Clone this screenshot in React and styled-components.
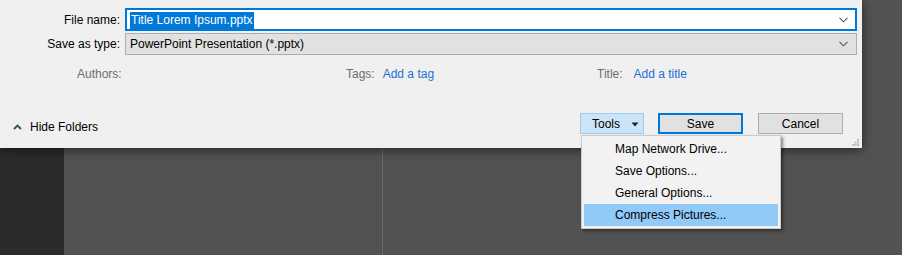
import React from "react";
import styled, { createGlobalStyle } from "styled-components";

const GlobalStyle = createGlobalStyle`
  html, body {
    margin: 0;
    padding: 0;
    background: #525252;
    overflow: hidden;
  }
  body {
    font-family: "Liberation Sans", Arial, sans-serif;
    font-size: 12px;
  }
`;

const Screen = styled.div`
  position: relative;
  width: 902px;
  height: 255px;
  display: grid;
  grid-template-columns: 64px 319px 1fr;
  background: #525252;
`;

const SideStrip = styled.div`
  background: #2b2b2b;
`;

const Pane = styled.div`
  background: #525252;
  border-right: ${(p) => (p.$divider ? "1px solid #6a6a6a" : "none")};
`;

const Dialog = styled.div`
  position: absolute;
  top: 0;
  left: 0;
  width: 862px;
  height: 148px;
  box-sizing: border-box;
  padding: 8px 5px 0 0;
  background: #f0f0f0;
  box-shadow: 0 2px 10px rgba(0, 0, 0, 0.55);
  display: flex;
  flex-direction: column;
  color: #000;
`;

const FieldRow = styled.div`
  display: grid;
  grid-template-columns: 120px 1fr;
  column-gap: 5px;
  align-items: center;
  margin-bottom: 2px;
`;

const Label = styled.span`
  text-align: right;
`;

const Combo = styled.div`
  height: ${(p) => (p.$focused ? "23px" : "22px")};
  box-sizing: border-box;
  display: flex;
  align-items: center;
  padding: 0 8px 0 4px;
  background: ${(p) => (p.$focused ? "#fff" : "#e1e1e1")};
  border: 1px solid ${(p) => (p.$focused ? "#0078d7" : "#adadad")};
  outline: ${(p) => (p.$focused ? "1px solid #0078d7" : "none")};
  outline-offset: -2px;
`;

const ComboText = styled.span`
  flex: 1;
`;

const Selected = styled.span`
  background: #0078d7;
  color: #fff;
  padding: 1px 1px 2px;
`;

const Chevron = () => (
  <svg width="9" height="6" viewBox="0 0 9 6">
    <path d="M0.5 0.8 L4.5 4.8 L8.5 0.8" fill="none" stroke="#555" strokeWidth="1.1" />
  </svg>
);

const MetaRow = styled.div`
  display: flex;
  align-items: center;
  margin-top: 8px;
  padding-left: 77px;
  height: 18px;
`;

const MetaItem = styled.div`
  width: ${(p) => p.$w}px;
  display: flex;
  gap: ${(p) => p.$gap || 11}px;
  flex-shrink: 0;
`;

const MetaLabel = styled.span`
  color: #6d6d6d;
`;

const MetaLink = styled.span`
  color: #1c6fd0;
`;

const Footer = styled.div`
  margin-top: auto;
  display: flex;
  align-items: center;
  padding: 0 14px 14px 13px;
`;

const HideFolders = styled.div`
  display: flex;
  align-items: center;
  gap: 8px;
  margin-top: 7px;
`;

const Spacer = styled.div`
  flex: 1;
`;

const Button = styled.div`
  width: ${(p) => p.$w}px;
  height: 21px;
  box-sizing: border-box;
  display: flex;
  align-items: center;
  justify-content: center;
  margin-left: ${(p) => p.$ml || 0}px;
  background: #e1e1e1;
  border: ${(p) => (p.$default ? "2px solid #0078d7" : "1px solid #adadad")};
`;

const ToolsButton = styled.div`
  width: 64px;
  height: 21px;
  box-sizing: border-box;
  display: flex;
  align-items: center;
  padding: 1px 4px 0 11px;
  background: #cce4f7;
  border: 1px solid #9fcdf2;
  justify-content: space-between;
`;

const Grip = styled.svg`
  position: absolute;
  right: 3px;
  bottom: 2px;
`;

const Menu = styled.div`
  position: absolute;
  top: 135px;
  left: 581px;
  width: 200px;
  box-sizing: border-box;
  padding: 2px;
  background: #f2f2f2;
  border: 1px solid #cccccc;
  box-shadow: 2px 2px 3px rgba(0, 0, 0, 0.45);
`;

const MenuItem = styled.div`
  height: 22px;
  display: flex;
  align-items: center;
  padding-left: 31px;
  background: ${(p) => (p.$active ? "#91c9f7" : "transparent")};
`;

const menuItems = [
  "Map Network Drive...",
  "Save Options...",
  "General Options...",
  "Compress Pictures...",
];

export default function App() {
  return (
    <>
      <GlobalStyle />
      <Screen>
        <SideStrip />
        <Pane $divider />
        <Pane />

        <Dialog>
          <FieldRow>
            <Label>File name:</Label>
            <Combo $focused>
              <ComboText>
                <Selected>Title Lorem Ipsum.pptx</Selected>
              </ComboText>
              <Chevron />
            </Combo>
          </FieldRow>
          <FieldRow>
            <Label>Save as type:</Label>
            <Combo>
              <ComboText>PowerPoint Presentation (*.pptx)</ComboText>
              <Chevron />
            </Combo>
          </FieldRow>

          <MetaRow>
            <MetaItem $w={269}>
              <MetaLabel>Authors:</MetaLabel>
            </MetaItem>
            <MetaItem $w={251} $gap={8}>
              <MetaLabel>Tags:</MetaLabel>
              <MetaLink>Add a tag</MetaLink>
            </MetaItem>
            <MetaItem $w={120}>
              <MetaLabel>Title:</MetaLabel>
              <MetaLink>Add a title</MetaLink>
            </MetaItem>
          </MetaRow>

          <Footer>
            <HideFolders>
              <svg width="9" height="6" viewBox="0 0 9 6">
                <path d="M1 5 L4.5 1.5 L8 5" fill="none" stroke="#4a4a4a" strokeWidth="1.8" />
              </svg>
              <span>Hide Folders</span>
            </HideFolders>
            <Spacer />
            <ToolsButton>
              <span>Tools</span>
              <svg width="8" height="5" viewBox="0 0 8 5">
                <path d="M0.5 0.5 L7.5 0.5 L4 4.5 Z" fill="#222" />
              </svg>
            </ToolsButton>
            <Button $w={85} $ml={14} $default>
              Save
            </Button>
            <Button $w={85} $ml={15}>
              Cancel
            </Button>
          </Footer>

          <Grip width="7" height="7" viewBox="0 0 7 7">
            <rect x="5" y="0" width="2" height="2" fill="#bdbdbd" />
            <rect x="2.5" y="2.5" width="2" height="2" fill="#bdbdbd" />
            <rect x="5" y="2.5" width="2" height="2" fill="#bdbdbd" />
            <rect x="0" y="5" width="2" height="2" fill="#bdbdbd" />
            <rect x="2.5" y="5" width="2" height="2" fill="#bdbdbd" />
            <rect x="5" y="5" width="2" height="2" fill="#bdbdbd" />
          </Grip>
        </Dialog>

        <Menu>
          {menuItems.map((item, i) => (
            <MenuItem key={item} $active={i === menuItems.length - 1}>
              {item}
            </MenuItem>
          ))}
        </Menu>
      </Screen>
    </>
  );
}
